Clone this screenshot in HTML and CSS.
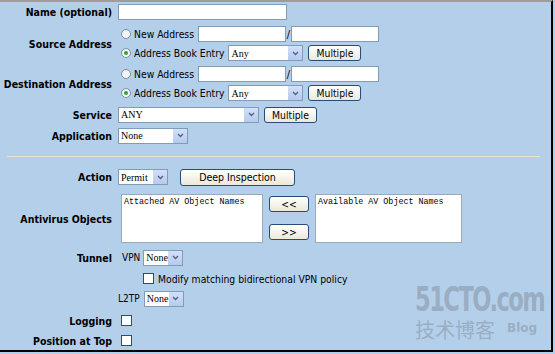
FILE: index.html
```html
<!DOCTYPE html>
<html lang="en">
<head>
    <meta charset="UTF-8">
    <title>Policy</title>
    <link rel="stylesheet" href="styles.css">
</head>
<body>

<div class="page">
    <div class="row row-name">
        <div class="label">Name (optional)</div>
        <div class="field"><span class="text w-name"></span></div>
    </div>

    <div class="row row-addr row-src">
        <div class="label">Source Address</div>
        <div class="field stack">
            <div class="line">
                <span class="radio"></span><span class="opt">New Address</span>
                <span class="text w-ip"></span><span class="slash">/</span><span class="text w-ip"></span>
            </div>
            <div class="line">
                <span class="radio on"></span><span class="opt">Address Book Entry</span>
                <span class="select w-book"><span class="val">Any</span><span class="arrow"><svg width="7" height="5" viewBox="0 0 7 5"><path d="M1 1l2.5 2.5L6 1" fill="none" stroke="#4d6185" stroke-width="1.3"/></svg></span></span>
                <span class="btn w-multi">Multiple</span>
            </div>
        </div>
    </div>

    <div class="row row-addr">
        <div class="label">Destination Address</div>
        <div class="field stack">
            <div class="line">
                <span class="radio"></span><span class="opt">New Address</span>
                <span class="text w-ip"></span><span class="slash">/</span><span class="text w-ip"></span>
            </div>
            <div class="line">
                <span class="radio on"></span><span class="opt">Address Book Entry</span>
                <span class="select w-book"><span class="val">Any</span><span class="arrow"><svg width="7" height="5" viewBox="0 0 7 5"><path d="M1 1l2.5 2.5L6 1" fill="none" stroke="#4d6185" stroke-width="1.3"/></svg></span></span>
                <span class="btn w-multi">Multiple</span>
            </div>
        </div>
    </div>

    <div class="row row-service">
        <div class="label">Service</div>
        <div class="field">
            <span class="select w-service"><span class="val">ANY</span><span class="arrow"><svg width="7" height="5" viewBox="0 0 7 5"><path d="M1 1l2.5 2.5L6 1" fill="none" stroke="#4d6185" stroke-width="1.3"/></svg></span></span>
            <span class="btn w-multi">Multiple</span>
        </div>
    </div>

    <div class="row row-app">
        <div class="label">Application</div>
        <div class="field">
            <span class="select w-app"><span class="val">None</span><span class="arrow"><svg width="7" height="5" viewBox="0 0 7 5"><path d="M1 1l2.5 2.5L6 1" fill="none" stroke="#4d6185" stroke-width="1.3"/></svg></span></span>
        </div>
    </div>

    <hr class="sep">

    <div class="row row-action">
        <div class="label">Action</div>
        <div class="field">
            <span class="select w-action"><span class="val">Permit</span><span class="arrow"><svg width="7" height="5" viewBox="0 0 7 5"><path d="M1 1l2.5 2.5L6 1" fill="none" stroke="#4d6185" stroke-width="1.3"/></svg></span></span>
            <span class="btn w-deep">Deep Inspection</span>
        </div>
    </div>

    <div class="row row-av">
        <div class="label">Antivirus Objects</div>
        <div class="field av">
            <div class="list w-attached">Attached AV Object Names</div>
            <div class="movers">
                <span class="btn w-move">&lt;&lt;</span>
                <span class="btn w-move">&gt;&gt;</span>
            </div>
            <div class="list w-avail">Available AV Object Names</div>
        </div>
    </div>

    <div class="row row-tunnel">
        <div class="label">Tunnel</div>
        <div class="field">
            <span class="sub sub-vpn">VPN</span>
            <span class="select w-small"><span class="val">None</span><span class="arrow"><svg width="7" height="5" viewBox="0 0 7 5"><path d="M1 1l2.5 2.5L6 1" fill="none" stroke="#4d6185" stroke-width="1.3"/></svg></span></span>
        </div>
    </div>

    <div class="row row-modify">
        <div class="label"></div>
        <div class="field">
            <span class="check check-modify"></span><span class="opt">Modify matching bidirectional VPN policy</span>
        </div>
    </div>

    <div class="row row-l2tp">
        <div class="label"></div>
        <div class="field">
            <span class="sub sub-l2tp">L2TP</span>
            <span class="select w-small"><span class="val">None</span><span class="arrow"><svg width="7" height="5" viewBox="0 0 7 5"><path d="M1 1l2.5 2.5L6 1" fill="none" stroke="#4d6185" stroke-width="1.3"/></svg></span></span>
        </div>
    </div>

    <div class="row row-log">
        <div class="label">Logging</div>
        <div class="field"><span class="check"></span></div>
    </div>

    <div class="row row-top">
        <div class="label">Position at Top</div>
        <div class="field"><span class="check"></span></div>
    </div>

    <div class="watermark">
        <div class="wm-big">51CTO.com</div>
        <div class="wm-small"><span class="wm-cn">技术博客</span><span class="wm-blog">Blog</span></div>
    </div>
</div>

</body>
</html>
```

FILE: styles.css
```css
body {
    margin: 0;
    padding: 0;
    background: #b4cfe9;
    font-family: 'DejaVu Sans Condensed', 'DejaVu Sans', Tahoma, sans-serif;
    font-size: 10px;
    color: #000;
}

.page {
    position: relative;
    width: 553px;
    height: 352px;
    box-sizing: border-box;
    border-top: 2px solid #a09e94;
    border-right: 2px solid #000;
    border-bottom: 2px solid #000;
    padding-top: 1px;
}

.row {
    display: flex;
    align-items: center;
}

.label {
    width: 112px;
    flex: none;
    text-align: right;
    font-weight: bold;
    font-size: 10.5px;
    padding-right: 6px;
}

.field {
    display: flex;
    align-items: center;
}

.stack {
    flex-direction: column;
    align-items: flex-start;
    gap: 3px;
}

.line {
    display: flex;
    align-items: center;
    height: 16px;
}

.row-name { height: 17px; }
.row-addr { margin-top: 5px; }
.row-src { margin-top: 6px; }
.row-service { margin-top: 5px; height: 17px; }
.row-app { margin-top: 4px; height: 17px; }
.row-action { height: 18px; }
.row-av { margin-top: 8px; height: 49px; align-items: center; }
.row-tunnel { margin-top: 6px; height: 17px; }
.row-modify { margin-top: 4px; height: 17px; }
.row-l2tp { margin-top: 3px; height: 17px; }
.row-log { margin-top: 5px; height: 17px; }
.row-top { margin-top: 3px; height: 17px; }

.sep {
    margin: 11px 11px 11px 7px;
    height: 0;
    border: none;
    border-top: 1px solid #d2c9a9;
    border-bottom: 1px solid #e6e2d4;
}

.text {
    display: inline-block;
    height: 14px;
    background: #fff;
    border: 1px solid #7f9db9;
}

.w-name { width: 167px; }
.w-ip { width: 86px; }

.slash {
    width: 5px;
    text-align: center;
    font-size: 11px;
}

.radio {
    width: 10px;
    height: 10px;
    margin-left: 3px;
    margin-right: 3px;
    box-sizing: border-box;
    border: 1px solid #7b8fa8;
    border-radius: 50%;
    background: #f4f4f4;
    position: relative;
}

.radio.on::after {
    content: "";
    position: absolute;
    left: 2px;
    top: 2px;
    width: 4px;
    height: 4px;
    border-radius: 50%;
    background: #2fa52f;
}

.opt {
    margin-right: 4px;
    font-size: 10.3px;
}

.select {
    display: flex;
    align-items: center;
    justify-content: space-between;
    height: 16px;
    box-sizing: border-box;
    background: #fff;
    border: 1px solid #7f9db9;
    font-family: 'Liberation Serif', 'DejaVu Serif', serif;
    font-size: 10px;
}

.select .val {
    padding-left: 2px;
}

.arrow {
    width: 14px;
    height: 14px;
    display: flex;
    align-items: center;
    justify-content: center;
    background: linear-gradient(#d3e0f8, #b6c9ef);
}

.w-book { width: 75px; }
.w-service { width: 141px; }
.w-app { width: 70px; }
.w-action { width: 50px; }
.w-small { width: 40px; }

.btn {
    display: flex;
    align-items: center;
    justify-content: center;
    height: 16px;
    box-sizing: border-box;
    border: 1px solid #2a4a78;
    border-radius: 3px;
    background: linear-gradient(#ffffff, #ece9d8);
    font-size: 10.3px;
}

.w-multi { width: 53px; margin-left: 5px; }
.w-deep { width: 115px; height: 17px; margin-left: 12px; font-size: 10.5px; }
.w-move { width: 40px; }

.av {
    align-items: stretch;
    height: 49px;
}

.list {
    box-sizing: border-box;
    background: #fff;
    border: 1px solid #9aa8b8;
    font-family: 'Liberation Mono', 'DejaVu Sans Mono', monospace;
    font-size: 8.4px;
    padding: 2px 2px;
}

.w-attached { width: 142px; margin-left: 3px; }
.w-avail { width: 147px; margin-left: 6px; }

.movers {
    display: flex;
    flex-direction: column;
    justify-content: space-between;
    margin-left: 6px;
    padding: 2px 0 3px;
}

.sub {
    font-size: 10px;
}

.sub-vpn { margin-left: 4px; margin-right: 3px; }
.sub-l2tp { margin-right: 4px; }

.check {
    width: 11px;
    height: 11px;
    box-sizing: border-box;
    border: 1px solid #1c5180;
    background: #fff;
    margin-left: 3px;
}

.check-modify {
    margin-left: 25px;
    margin-right: 4px;
}

.watermark {
    position: absolute;
    left: 415px;
    top: 283px;
    color: rgba(120, 132, 146, 0.45);
}

.wm-big {
    font-family: 'DejaVu Sans Condensed', 'DejaVu Sans', sans-serif;
    font-weight: bold;
    font-size: 33px;
    letter-spacing: -2px;
    line-height: 30px;
    width: 126px;
    white-space: nowrap;
    transform: scaleX(0.76);
    transform-origin: left;
}

.wm-small {
    display: flex;
    align-items: flex-end;
    margin-top: 5px;
}

.wm-cn {
    font-family: 'Noto Sans CJK SC', sans-serif;
    font-size: 20px;
    line-height: 20px;
}

.wm-blog {
    font-family: 'DejaVu Sans', sans-serif;
    font-weight: bold;
    font-size: 12px;
    line-height: 12px;
    margin-left: 12px;
    margin-bottom: 6px;
}
```
